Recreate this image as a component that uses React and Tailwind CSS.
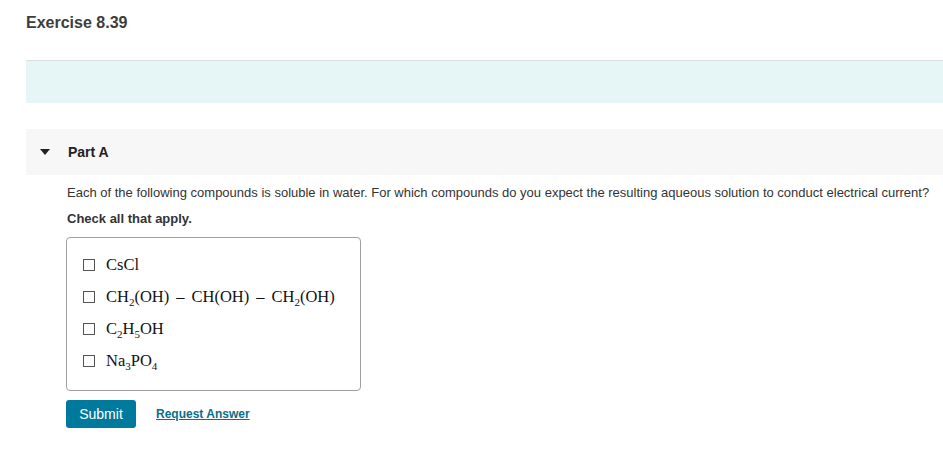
export default function App() {
  const sub = "align-[-4px] text-[11px] leading-none";
  const op = "mx-[7px]";
  const items = [
    <>CsCl</>,
    <>
      CH<span className={sub}>2</span>(OH)<span className={op}>–</span>CH(OH)<span className={op}>–</span>CH<span className={sub}>2</span>(OH)
    </>,
    <>
      C<span className={sub}>2</span>H<span className={sub}>5</span>OH
    </>,
    <>
      Na<span className={sub}>3</span>PO<span className={sub}>4</span>
    </>,
  ];

  return (
    <div className="min-h-[461px] w-[943px] bg-white pl-[26px] font-['Liberation_Sans',Arial,sans-serif] text-[#333]">
      <h1 className="pt-[13px] text-[16px] font-bold leading-[20px] text-[#3d3d3d]">Exercise 8.39</h1>

      <div className="mt-[27px] h-[43px] border-t border-[#dcdcdc] bg-[#e6f5f5]"></div>

      <div className="mt-[26px] flex h-[46px] items-center gap-[18px] bg-[#f7f7f7] pl-[14px]">
        <svg width="10" height="6" viewBox="0 0 10 6">
          <path d="M0 0 L10 0 L5 6 Z" fill="#222" />
        </svg>
        <span className="text-[14px] font-bold text-[#222]">Part A</span>
      </div>

      <div className="flex flex-col items-start pl-[40px]">
        <p className="mt-[9px] pl-[1px] text-[13px] leading-[18px] text-[#333]">
          Each of the following compounds is soluble in water. For which compounds do you expect the resulting aqueous solution to conduct electrical current?
        </p>
        <p className="mt-[8px] pl-[1px] text-[13px] font-bold leading-[18px] text-[#333]">Check all that apply.</p>

        <div className="mt-[9px] w-[295px] rounded-[4px] border border-[#a0a0a0] px-[16px] pb-[19px] pt-[17px]">
          <ul className="flex flex-col gap-[12px]">
            {items.map((it, i) => (
              <li key={i} className="flex h-[20px] items-center gap-[11px]">
                <span className="h-[12px] w-[12px] border border-[#555] bg-white"></span>
                <span className="font-['Liberation_Serif',serif] text-[16.5px] leading-[20px] text-[#111]">{it}</span>
              </li>
            ))}
          </ul>
        </div>

        <div className="mt-[9px] flex items-center gap-[20px]">
          <button className="h-[28px] w-[70px] rounded-[3px] bg-[#007a9c] text-[14px] text-white">Submit</button>
          <a href="#" className="text-[12px] font-bold text-[#0b6e8a] underline">Request Answer</a>
        </div>
      </div>
    </div>
  );
}
